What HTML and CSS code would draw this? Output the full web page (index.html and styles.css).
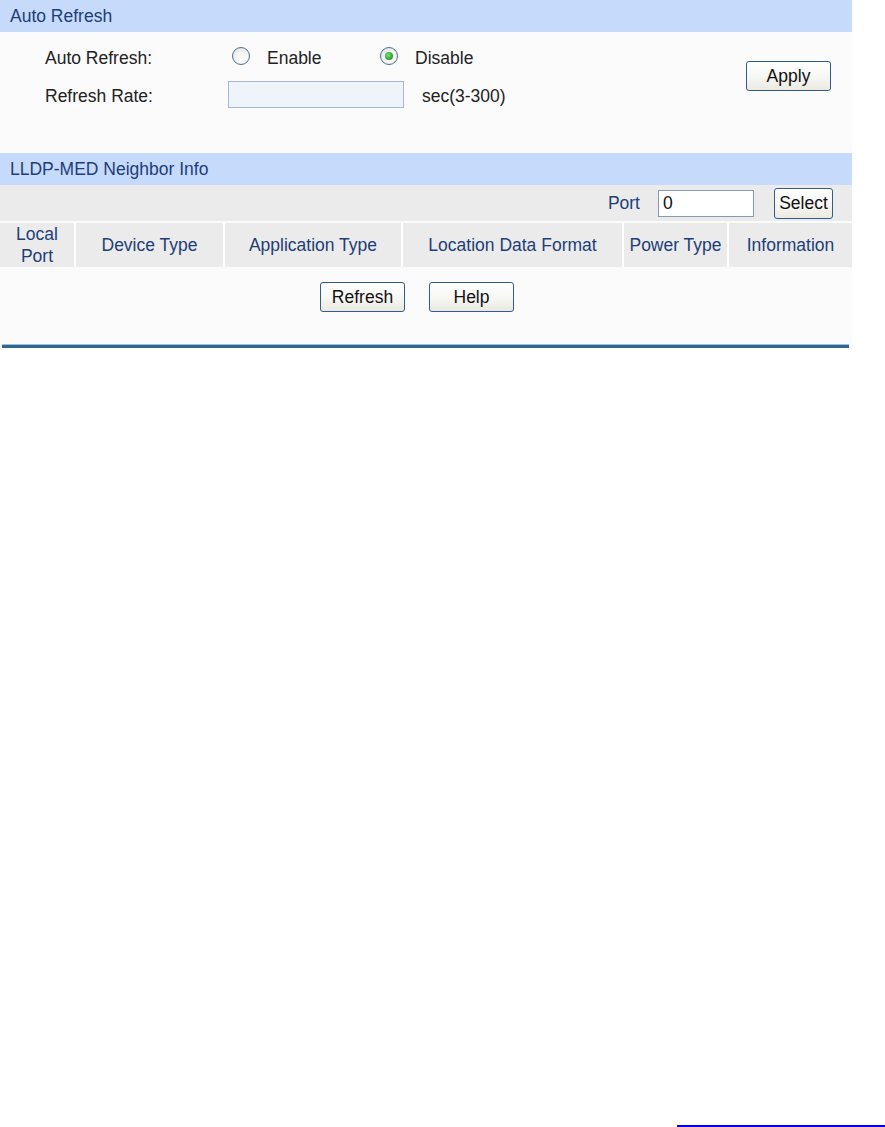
FILE: index.html
```html
<!DOCTYPE html>
<html lang="en">
<head>
    <meta charset="UTF-8">
    <title>LLDP-MED Neighbor Info</title>
    <link rel="stylesheet" href="styles.css">
</head>
<body>
    <div class="page">
        <div class="panel">
            <div class="bar">Auto Refresh</div>
            <div class="refresh-form">
                <div class="rows">
                    <div class="row">
                        <span class="label">Auto Refresh:</span>
                        <label class="option"><span class="radio"></span>Enable</label>
                        <label class="option"><span class="radio checked"></span>Disable</label>
                    </div>
                    <div class="row">
                        <span class="label">Refresh Rate:</span>
                        <input type="text" class="rate-input">
                        <span class="hint">sec(3-300)</span>
                    </div>
                </div>
                <button class="btn apply">Apply</button>
            </div>

            <div class="bar">LLDP-MED Neighbor Info</div>
            <div class="toolbar">
                <span class="port-label">Port</span>
                <input type="text" class="port-input" value="0">
                <button class="btn select">Select</button>
            </div>
            <div class="grid-head">
                <div class="cell">Local<br>Port</div>
                <div class="cell">Device Type</div>
                <div class="cell">Application Type</div>
                <div class="cell">Location Data Format</div>
                <div class="cell">Power Type</div>
                <div class="cell">Information</div>
            </div>
            <div class="actions">
                <button class="btn">Refresh</button>
                <button class="btn">Help</button>
            </div>
            <div class="rule"></div>
        </div>
        <div class="link-line"></div>
    </div>
</body>
</html>
```

FILE: styles.css
```css
body {
    margin: 0;
    background: #fff;
    font-family: "Liberation Sans", Arial, sans-serif;
    font-size: 17.5px;
    color: #222;
}
.page {
    min-height: 1127px;
    display: flex;
    flex-direction: column;
}
.panel {
    width: 852px;
    background: #fbfbfb;
}
.bar {
    height: 32px;
    line-height: 33px;
    padding-left: 10px;
    background: #c6dbfc;
    color: #1d3e78;
}
.refresh-form {
    height: 121px;
    display: flex;
    align-items: flex-start;
    justify-content: space-between;
    padding-right: 21px;
}
.rows {
    padding: 7px 0 0 45px;
}
.row {
    height: 38px;
    display: flex;
    align-items: center;
}
.label {
    width: 183px;
}
.option {
    display: flex;
    align-items: center;
    width: 148px;
}
.radio {
    box-sizing: border-box;
    width: 18px;
    height: 18px;
    margin: -4px 17px 0 4px;
    border: 1px solid #4f6f93;
    border-radius: 50%;
    background: radial-gradient(circle at 60% 65%, #fff 0%, #f4f4f2 45%, #d9dbde 100%);
    position: relative;
}
.radio.checked::after {
    content: "";
    position: absolute;
    left: 4px;
    top: 4px;
    width: 8px;
    height: 8px;
    border-radius: 50%;
    background: radial-gradient(circle at 40% 40%, #7fe07f 0%, #2fa52f 60%, #1f7d1f 100%);
}
.rate-input {
    box-sizing: border-box;
    width: 176px;
    height: 27px;
    margin: -3px 18px 0 0;
    border: 1px solid #a4b8d3;
    background: #eff3fa;
}
.btn {
    font-family: "Liberation Sans", Arial, sans-serif;
    font-size: 17.5px;
    color: #111;
    width: 85px;
    height: 30px;
    padding: 0;
    border: 1px solid #2f5d8c;
    border-radius: 3px;
    background: linear-gradient(#ffffff 0%, #f6f6f3 55%, #ebe9e0 100%);
}
.apply {
    margin-top: 29px;
}
.toolbar {
    height: 36px;
    display: flex;
    align-items: center;
    justify-content: flex-end;
    padding-right: 19px;
    background: #ebebeb;
}
.port-label {
    color: #1d3e78;
    margin-right: 18px;
}
.port-input {
    box-sizing: border-box;
    width: 96px;
    height: 27px;
    margin-right: 20px;
    padding: 0 4px;
    border: 1px solid #7f9db9;
    background: #fff;
    font-family: "Liberation Sans", Arial, sans-serif;
    font-size: 17.5px;
    color: #111;
}
.select {
    width: 59px;
    height: 31px;
}
.grid-head {
    display: grid;
    grid-template-columns: 74px 147px 176px 219px 103px 1fr;
    column-gap: 2px;
    margin-top: 2px;
    background: #fff;
}
.cell {
    height: 44px;
    display: flex;
    align-items: center;
    justify-content: center;
    text-align: center;
    line-height: 22px;
    background: #ebebeb;
    color: #1d3e78;
}
.actions {
    box-sizing: border-box;
    height: 77px;
    display: flex;
    justify-content: center;
    gap: 24px;
    padding: 15px 18px 0 0;
}
.actions .btn {
    width: 85px;
}
.rule {
    margin: 0 3px 0 2px;
    height: 3px;
    border-top: 1px solid #a9bccc;
    background: #2d6894;
}
.link-line {
    margin-top: auto;
    margin-left: 677px;
    height: 2px;
    background: #0000ff;
}
```
